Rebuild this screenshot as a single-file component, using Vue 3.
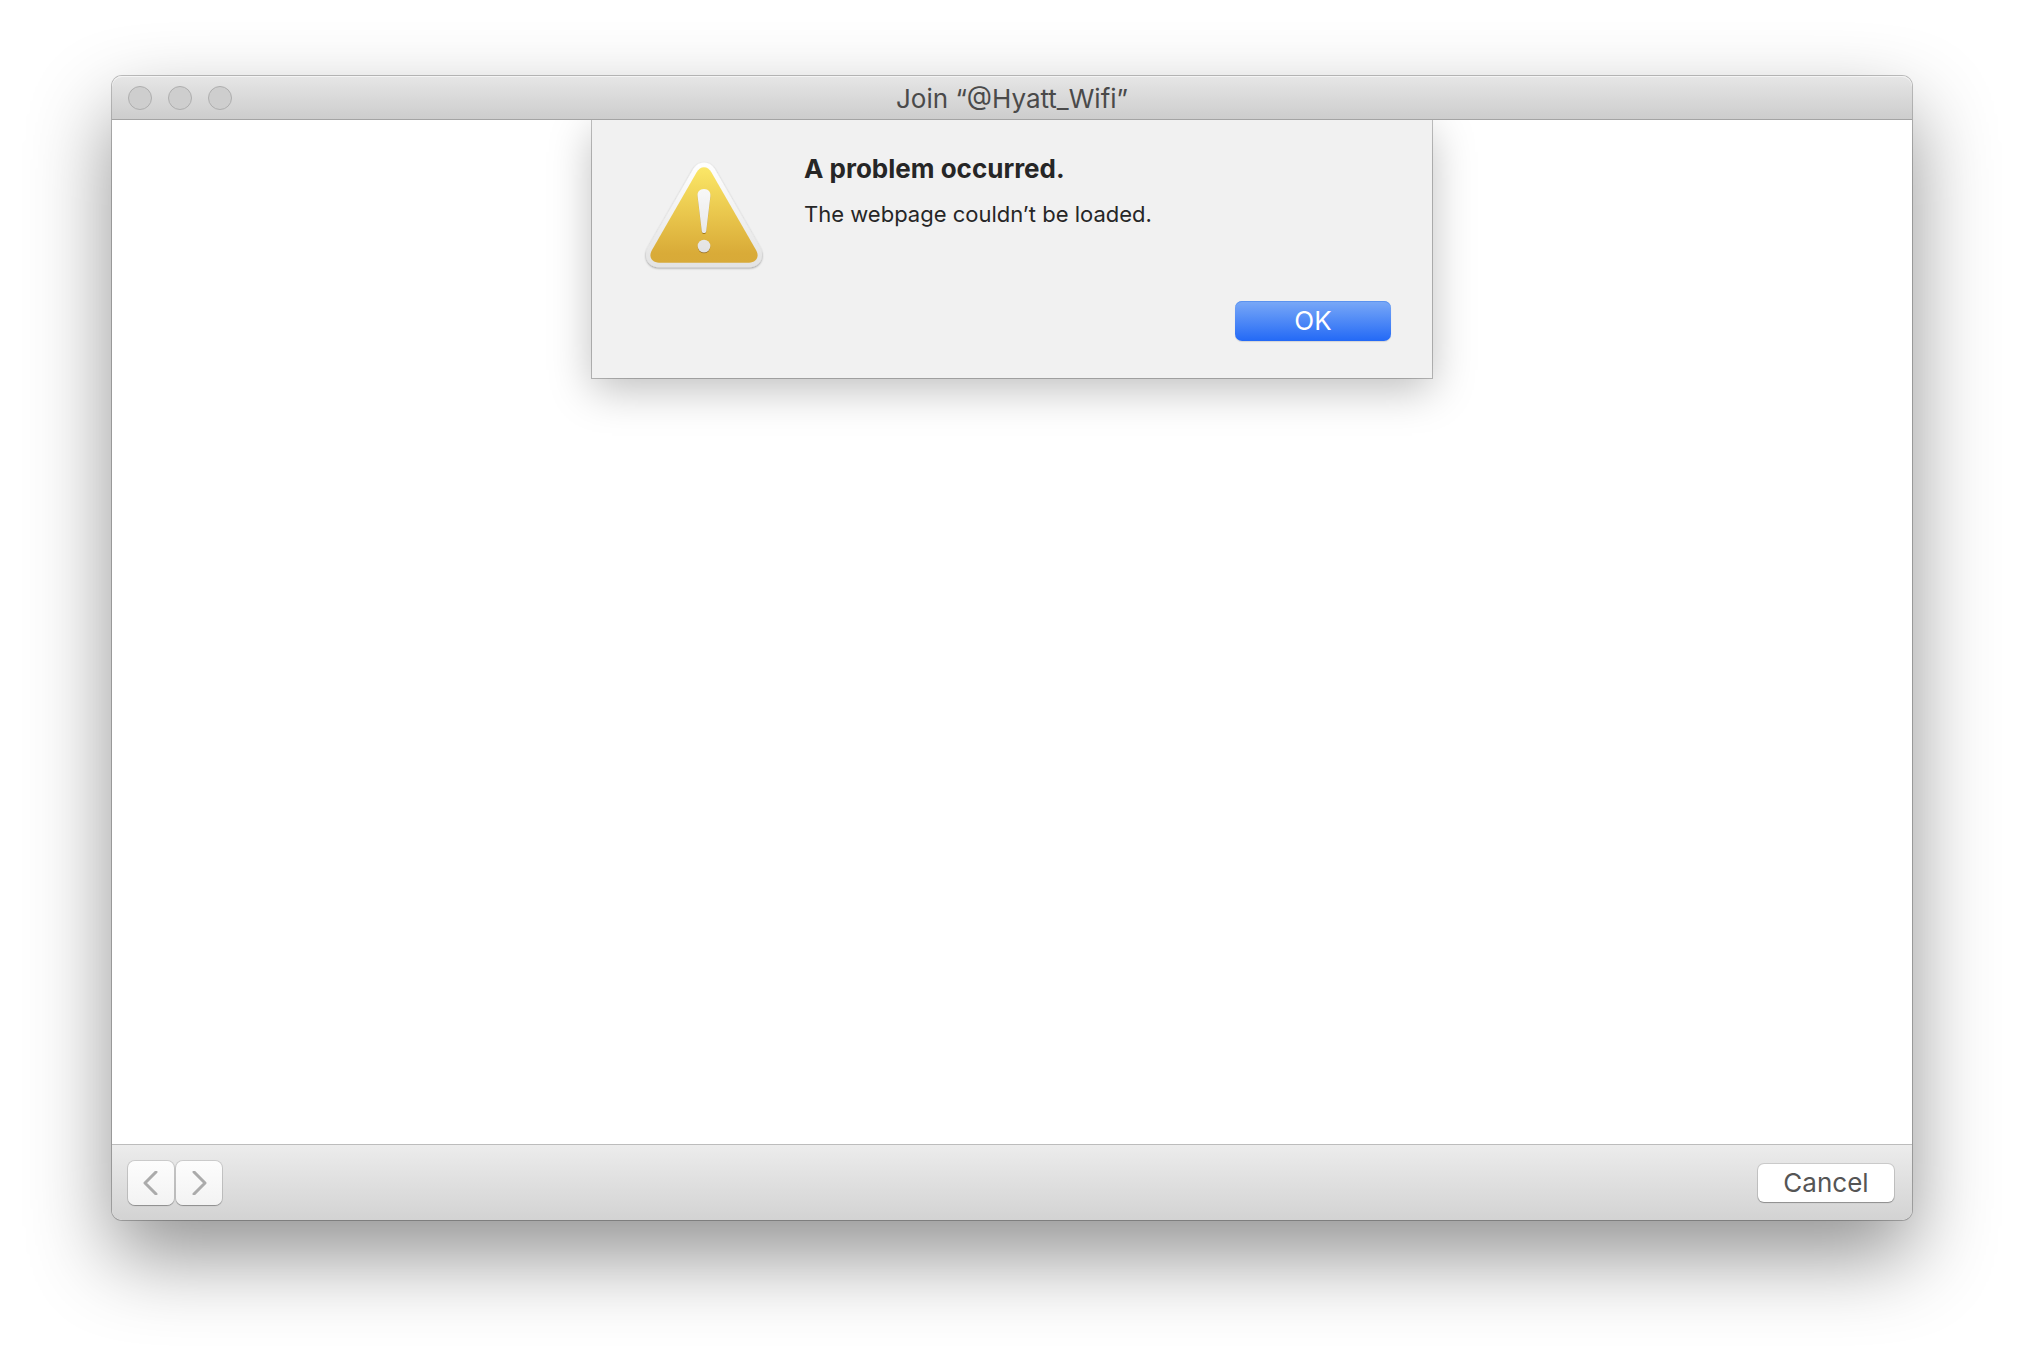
<script setup>
import { ref } from 'vue'

const network = '@Hyatt_Wifi'
const sheetOpen = ref(true)
const lights = ['Close', 'Minimize', 'Zoom']
</script>

<template>
  <div class="desktop">
    <section class="window" aria-labelledby="window-title">
      <header class="titlebar">
        <div class="lights">
          <button v-for="name in lights" :key="name" class="light" type="button" :aria-label="name" disabled></button>
        </div>
        <h1 id="window-title" class="title">Join “{{ network }}”</h1>
      </header>

      <main class="content">
        <div v-if="sheetOpen" class="sheet" role="alertdialog" aria-labelledby="sheet-title" aria-describedby="sheet-text">
          <svg class="alert-icon" viewBox="0 0 128 128" aria-hidden="true">
            <defs>
              <linearGradient id="rim" x1="0" y1="0" x2="0" y2="1">
                <stop offset="0" stop-color="#ffffff" />
                <stop offset="1" stop-color="#e3e3e3" />
              </linearGradient>
              <linearGradient id="gold" x1="0" y1="0" x2="0" y2="1">
                <stop offset="0" stop-color="#fbe767" />
                <stop offset="0.5" stop-color="#e9c64c" />
                <stop offset="0.9" stop-color="#d9ab38" />
                <stop offset="1" stop-color="#d8aa38" />
              </linearGradient>
              <linearGradient id="mark" gradientUnits="userSpaceOnUse" x1="0" y1="37" x2="0" y2="101">
                <stop offset="0" stop-color="#f8f8f8" />
                <stop offset="1" stop-color="#e2e2e2" />
              </linearGradient>
              <filter id="rim-shadow" x="-10%" y="-10%" width="120%" height="120%">
                <feDropShadow dx="0" dy="1" stdDeviation="1" flood-color="#000" flood-opacity="0.38" />
              </filter>
              <filter id="mark-shadow" x="-30%" y="-10%" width="160%" height="120%">
                <feDropShadow dx="0" dy="1" stdDeviation="0.7" flood-color="#7a5200" flood-opacity="0.6" />
              </filter>
            </defs>
            <path filter="url(#rim-shadow)" fill="url(#rim)" d="M53.500 16.500Q57.500 10.500 64 10.500T74.500 16.500L120 95.500C125.500 105.500 119 115.200 109.500 115.200H18.500C9 115.200 2.500 105.500 8 95.500Z" />
            <path fill="url(#gold)" d="M56.500 20.500Q59.500 15.300 64 15.300T71.500 20.500L116 98C120 105 116 110.700 109 110.700H19C12 110.700 8 105 12 98Z" />
            <g filter="url(#mark-shadow)" fill="url(#mark)">
              <path d="M64 37C68.500 37 70.700 40 70.400 44L66.200 79C65.900 81.700 62.100 81.700 61.800 79L57.600 44C57.300 40 59.500 37 64 37Z" />
              <circle cx="64" cy="94" r="6.300" />
            </g>
          </svg>
          <div class="message">
            <h2 id="sheet-title">A problem occurred.</h2>
            <p id="sheet-text">The webpage couldn’t be loaded.</p>
            <button class="ok" type="button" @click="sheetOpen = false">OK</button>
          </div>
        </div>
      </main>

      <footer class="toolbar">
        <nav class="history">
          <button class="nav" type="button" aria-label="Back" disabled>
            <svg viewBox="0 0 24 24" aria-hidden="true"><path d="M17 1L6 12L17 23" /></svg>
          </button>
          <button class="nav" type="button" aria-label="Forward" disabled>
            <svg viewBox="0 0 24 24" aria-hidden="true"><path d="M7 1L18 12L7 23" /></svg>
          </button>
        </nav>
        <button class="cancel" type="button">Cancel</button>
      </footer>
    </section>
  </div>
</template>

<style>
body {
  margin: 0;
  background: #fff;
}
</style>

<style scoped>
.desktop {
  box-sizing: border-box;
  display: flex;
  min-height: 100vh;
  padding: 76px 112px 148px;
  overflow: hidden;
  font-family: Inter, "Liberation Sans", sans-serif;
  color: #262626;
}

button {
  box-sizing: border-box;
  margin: 0;
  padding: 0;
  border: 0;
  font-family: inherit;
  font-size: 26px;
  line-height: 38px;
}

.window {
  display: flex;
  flex: 1;
  flex-direction: column;
  min-width: 0;
  border-radius: 10px;
  background: #fff;
  box-shadow: 0 0 0 1px rgba(0, 0, 0, 0.24), 0 36px 82px rgba(0, 0, 0, 0.43);
}

.titlebar {
  display: grid;
  grid-template-columns: 1fr auto 1fr;
  align-items: center;
  box-sizing: border-box;
  height: 44px;
  padding: 0 16px;
  border-bottom: 1px solid #a4a4a4;
  border-radius: 10px 10px 0 0;
  background: linear-gradient(#e6e6e6, #cdcdcd);
  box-shadow: inset 0 1px #f4f4f4;
}

.lights {
  display: flex;
  gap: 16px;
}

.light {
  width: 24px;
  height: 24px;
  border: 1px solid #aeaeae;
  border-radius: 50%;
  background: #cecece;
}

.title {
  margin: 0;
  padding-top: 2px;
  font-size: 26px;
  font-weight: 400;
  line-height: 32px;
  color: #4a4a4a;
}

.content {
  flex: 1;
  overflow: hidden;
}

.sheet {
  display: flex;
  gap: 36px;
  box-sizing: border-box;
  width: 840px;
  max-width: 100%;
  margin: 0 auto;
  padding: 32px 41px 37px 48px;
  background: #f1f1f1;
  box-shadow: 0 0 0 1px rgba(0, 0, 0, 0.24), 0 12px 40px rgba(0, 0, 0, 0.25);
}

.alert-icon {
  flex: none;
  width: 128px;
  height: 128px;
}

.message {
  display: flex;
  flex: 1;
  flex-direction: column;
  align-items: flex-start;
}

h2 {
  margin: 0;
  font-size: 26px;
  font-weight: 700;
  line-height: 34px;
}

p {
  margin: 14px 0 0;
  font-size: 22px;
  line-height: 28px;
}

.ok {
  align-self: flex-end;
  width: 156px;
  height: 40px;
  margin-top: 73px;
  border-radius: 7px;
  background: linear-gradient(#7aa9f7, #2369f6);
  box-shadow: inset 0 1px #5b93ef, 0 1px 1px rgba(0, 0, 0, 0.12);
  color: #fff;
}

.toolbar {
  display: flex;
  align-items: center;
  justify-content: space-between;
  box-sizing: border-box;
  height: 76px;
  padding: 0 18px 0 16px;
  border-top: 1px solid #bcbcbc;
  border-radius: 0 0 10px 10px;
  background: linear-gradient(#ececec, #d3d3d3);
}

.history {
  display: flex;
  gap: 2px;
}

.nav {
  display: grid;
  place-items: center;
  width: 46px;
  height: 44px;
  border-radius: 7px;
  background: linear-gradient(#fdfdfd, #f3f3f3);
  box-shadow: 0 0 0 1px rgba(0, 0, 0, 0.12), 0 1px 1px rgba(0, 0, 0, 0.25);
}

.nav svg {
  width: 24px;
  height: 24px;
  fill: none;
  stroke: #ababab;
  stroke-width: 3;
  stroke-linecap: round;
  stroke-linejoin: round;
}

.cancel {
  width: 136px;
  height: 38px;
  border-radius: 6px;
  background: #fff;
  box-shadow: 0 0 0 1px rgba(0, 0, 0, 0.12), 0 1px 1px rgba(0, 0, 0, 0.25);
  color: #555;
}
</style>
